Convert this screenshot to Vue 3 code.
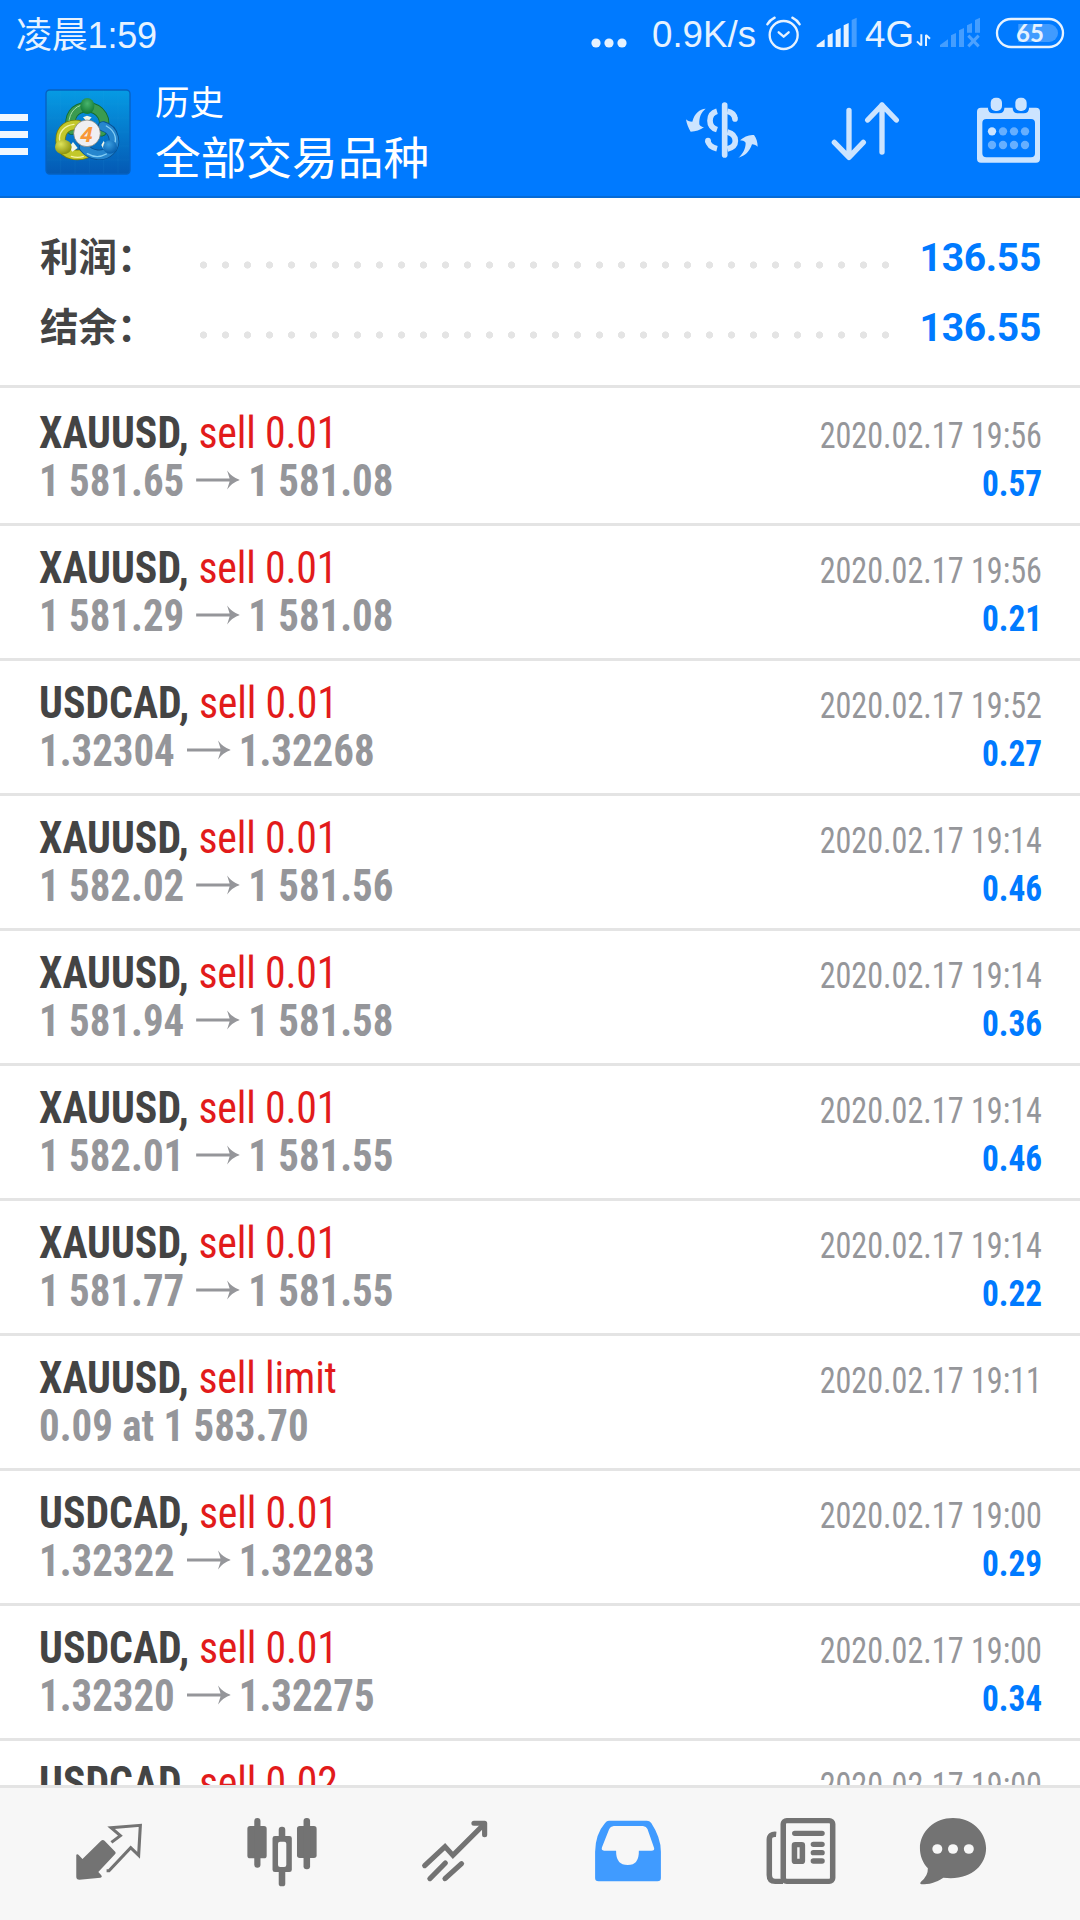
<script setup>
const summary = [
  { label: '利润：', value: '136.55' },
  { label: '结余：', value: '136.55' },
]
const deals = [
  { symbol: 'XAUUSD', side: 'sell 0.01', from: '1 581.65', to: '1 581.08', time: '2020.02.17 19:56', profit: '0.57' },
  { symbol: 'XAUUSD', side: 'sell 0.01', from: '1 581.29', to: '1 581.08', time: '2020.02.17 19:56', profit: '0.21' },
  { symbol: 'USDCAD', side: 'sell 0.01', from: '1.32304', to: '1.32268', time: '2020.02.17 19:52', profit: '0.27' },
  { symbol: 'XAUUSD', side: 'sell 0.01', from: '1 582.02', to: '1 581.56', time: '2020.02.17 19:14', profit: '0.46' },
  { symbol: 'XAUUSD', side: 'sell 0.01', from: '1 581.94', to: '1 581.58', time: '2020.02.17 19:14', profit: '0.36' },
  { symbol: 'XAUUSD', side: 'sell 0.01', from: '1 582.01', to: '1 581.55', time: '2020.02.17 19:14', profit: '0.46' },
  { symbol: 'XAUUSD', side: 'sell 0.01', from: '1 581.77', to: '1 581.55', time: '2020.02.17 19:14', profit: '0.22' },
  { symbol: 'XAUUSD', side: 'sell limit', from: '0.09 at 1 583.70', to: '', time: '2020.02.17 19:11', profit: '' },
  { symbol: 'USDCAD', side: 'sell 0.01', from: '1.32322', to: '1.32283', time: '2020.02.17 19:00', profit: '0.29' },
  { symbol: 'USDCAD', side: 'sell 0.01', from: '1.32320', to: '1.32275', time: '2020.02.17 19:00', profit: '0.34' },
  { symbol: 'USDCAD', side: 'sell 0.02', from: '', to: '', time: '2020.02.17 19:00', profit: '' },
]
</script>

<template>
  <div class="screen">
    <div class="status">
      <span class="clock">凌晨1:59</span>
      <svg class="more" width="36" height="10" viewBox="0 0 36 10" fill="#e6f2ff"><circle cx="5" cy="5" r="4.6" /><circle cx="18" cy="5" r="4.6" /><circle cx="31" cy="5" r="4.6" /></svg>
      <span class="speed">0.9K/s</span>
      <!-- alarm, signal -->
      <svg class="indicators" width="96" height="40" viewBox="586 39 288 120">
        <g fill="none" stroke="#e6f2ff" stroke-width="7" stroke-linecap="round" stroke-linejoin="round">
          <circle cx="642" cy="105" r="42" />
          <path d="M627 97l15 13 15-13" />
          <path d="M593 73Q601 60 615 53M690 73Q682 60 668 53" />
        </g>
        <g fill="#e6f2ff">
          <path d="M741 141v-6l24-17v23zM774 141v-35l15-7v42zM798 141V91l15-7v57zM822 141V76l15-7v72z" />
          <path d="M846 141V60l15-7v88z" opacity=".3" />
        </g>
      </svg>
      <span class="net">4G</span>
      <svg class="tail" width="150" height="40" viewBox="1038 39 450 120">
        <g fill="none" stroke="#e6f2ff" stroke-width="6">
          <path d="M1054 103v34M1041 124l12 12M1068 138v-34M1068 105l12 11" />
        </g>
        <g fill="#e6f2ff" opacity=".3">
          <path d="M1110 141v-6l24-17v23zM1143 141v-35l15-7v42zM1167 141V91l15-7v57zM1191 98V76l15-7v29zM1215 98V60l15-7v45z" />
        </g>
        <path d="M1195 107l31 32M1226 107l-31 32" stroke="#4da2ff" stroke-width="9" />
        <rect x="1281" y="57" width="198" height="84" rx="42" fill="none" stroke="#e6f2ff" stroke-width="7" />
        <path d="M1345 72h92a27 27 0 0 1 0 54h-92z" fill="#409bff" />
        <text x="1380" y="125" text-anchor="middle" class="battery">65</text>
      </svg>
    </div>

    <header class="bar">
      <div class="burger"><i></i><i></i><i></i></div>
      <svg class="logo" width="86" height="86" viewBox="46 26 258 258">
        <defs>
          <linearGradient id="tile" x2="0" y2="1"><stop offset="0" stop-color="#069be4" /><stop offset="1" stop-color="#0459b4" /></linearGradient>
          <radialGradient id="green" cx=".5" cy=".35" r=".6"><stop offset="0" stop-color="#48b46d" /><stop offset="1" stop-color="#167d38" /></radialGradient>
          <radialGradient id="yellow" cx=".35" cy=".3" r=".7"><stop offset="0" stop-color="#dfe35a" /><stop offset="1" stop-color="#8d9410" /></radialGradient>
          <radialGradient id="azure" cx=".4" cy=".3" r=".7"><stop offset="0" stop-color="#3b9fe0" /><stop offset="1" stop-color="#075fae" /></radialGradient>
        </defs>
        <rect x="49" y="29" width="252" height="252" rx="11" fill="url(#tile)" stroke="#0661c0" stroke-width="4" />
        <path d="M93 31v248M136 31v248M179 31v248M222 31v248M265 31v248M51 71h248M51 113h248M51 155h248M51 197h248M51 239h248" stroke="#35aeea" stroke-width="1" opacity=".25" />
        <g fill="none" stroke-linecap="round">
          <path d="M126 148C114 107 135 82 172 80C215 83 235 120 216 153" stroke="#146b31" stroke-width="31" />
          <path d="M126 148C114 107 135 82 172 80C215 83 235 120 216 153" stroke="#3b9b50" stroke-width="26" />
          <path d="M119 142C112 107 133 75 163 73" stroke="#a6dda9" stroke-width="3" />
          <path d="M145 134C105 131 87 157 94 195C105 224 143 229 169 219" stroke="#777d0c" stroke-width="31" />
          <path d="M145 134C105 131 87 157 94 195C105 224 143 229 169 219" stroke="#c3c82b" stroke-width="26" />
          <path d="M133 132C103 135 86 158 90 181M125 228Q145 234 161 228" stroke="#f5f3a3" stroke-width="4" />
          <path d="M220 138C256 148 262 192 241 211C221 231 183 227 163 201" stroke="#075194" stroke-width="31" />
          <path d="M220 138C256 148 262 192 241 211C221 231 183 227 163 201" stroke="#2686ce" stroke-width="26" />
          <path d="M230 137C262 155 261 183 251 196M173 220Q202 237 230 221" stroke="#85cff5" stroke-width="4" />
        </g>
        <path d="M160 111l12-5 14 5-13 15zM118 201l12-16 14 18-16 11zM215 194l7-12 11 17-12 6z" fill="#f1f6e8" />
        <ellipse cx="173" cy="77" rx="21" ry="24" fill="url(#green)" />
        <ellipse cx="101" cy="200" rx="25" ry="22" fill="url(#yellow)" />
        <ellipse cx="241" cy="200" rx="21" ry="20" fill="url(#azure)" />
        <circle cx="172" cy="159" r="40" fill="#f0eff2" stroke="#78776b" stroke-width="2" />
        <text x="171" y="184" text-anchor="middle" class="four">4</text>
      </svg>
      <div class="titles">
        <div class="small">历史</div>
        <div class="large">全部交易品种</div>
      </div>
      <div class="actions">
        <svg width="72" height="72" viewBox="78 46 216 216" fill="#cce4ff">
          <path d="M137 87C119 88 104 100 97 126C88 126 82 123 78 119C80 133 86 147 92 156C107 156 121 151 132 143C126 142 120 139 118 134C117 112 123 99 137 87z" />
          <path d="M235 234C256 229 269 215 276 194C283 194 289 197 293 201C293 188 289 175 282 166C267 164 252 171 240 182C247 182 253 184 257 189C257 207 248 224 235 234z" />
          <g fill="none" stroke="#cce4ff" stroke-width="17">
            <path d="M171 95Q150 101 150 123Q150 143 171 150" />
            <path d="M143 182Q146 201 171 207" stroke-linecap="butt" />
            <path d="M194 76V226" stroke-linecap="round" />
            <path d="M202 95Q222 99 225 117" />
            <path d="M202 157Q226 163 226 184Q226 202 202 208" />
          </g>
          <circle cx="144" cy="183" r="8.5" /><circle cx="225" cy="118" r="8.5" />
        </svg>
        <svg width="72" height="72" viewBox="509 46 216 216" fill="none" stroke="#cce4ff" stroke-width="16" stroke-linecap="round" stroke-linejoin="round">
          <path d="M566 92V233M522 188l44 45 43-45M665 217V76M622 121l43-45 43 45" />
        </svg>
        <svg width="72" height="72" viewBox="942 46 216 216" fill="#cce4ff">
          <path fill-rule="evenodd" d="M963 84H1128Q1140 84 1140 96V237Q1140 249 1128 249H963Q951 249 951 237V96Q951 84 963 84zM979 118Q967 118 967 130V221Q967 233 979 233H1113Q1125 233 1125 221V130Q1125 118 1113 118z" />
          <path d="M984 75V86Q984 101 1000 101H1017Q1033 101 1033 86V75zM1058 75V86Q1058 101 1074 101H1091Q1107 101 1107 86V75z" fill="#007aff" />
          <rect x="992" y="54" width="34" height="40" rx="15" /><rect x="1066" y="54" width="34" height="40" rx="15" />
          <circle cx="996" cy="155" r="12.5" />
          <g fill="#66afff"><circle cx="1029" cy="155" r="12.5" /><circle cx="1062" cy="155" r="12.5" /><circle cx="1095" cy="155" r="12.5" /><circle cx="996" cy="196" r="12.5" /><circle cx="1029" cy="196" r="12.5" /><circle cx="1062" cy="196" r="12.5" /><circle cx="1095" cy="196" r="12.5" /></g>
        </svg>
      </div>
    </header>

    <section class="summary">
      <div v-for="s in summary" :key="s.label" class="total">
        <span class="label">{{ s.label }}</span>
        <span class="dots"></span>
        <span class="value">{{ s.value }}</span>
      </div>
    </section>

    <main class="list">
      <article v-for="(d, i) in deals" :key="i" class="deal">
        <div class="line">
          <span class="name"><b>{{ d.symbol }},</b> <span class="side">{{ d.side }}</span></span>
          <span class="time">{{ d.time }}</span>
        </div>
        <div class="line">
          <span class="price">{{ d.from }}<template v-if="d.to"><svg class="arrow" width="48.5" height="20" viewBox="0 0 44 20" preserveAspectRatio="none" fill="#95969a"><path d="M0 8.6H33.500L31 0.500Q36 7.500 44 10Q36 12.500 31 19.500L33.500 11.400H0z" /></svg>{{ d.to }}</template></span>
          <span class="profit">{{ d.profit }}</span>
        </div>
      </article>
    </main>

    <nav class="tabs">
      <svg viewBox="211.5 168 209 216" preserveAspectRatio="none" fill="#737373">
        <path d="M221 284q4-3 7 1l11 12 54-55q5-4 10 0l31 33q3 4 0 7l-49 54 8 9q5 7-2 8l-61 6q-9 0-9-9z" />
        <path d="M323 247L349 227L322 203L407 196L402 286L379 263L316 332H309" fill="none" stroke="#737373" stroke-width="9" />
      </svg>
      <svg viewBox="713 168 209 216" preserveAspectRatio="none" fill="#737373">
        <rect x="717" y="198" width="56" height="97" rx="8" /><rect x="737" y="174" width="18" height="149" rx="9" />
        <rect x="861" y="198" width="57" height="96" rx="8" /><rect x="880" y="174" width="19" height="154" rx="9" />
        <rect x="808" y="200" width="19" height="45" rx="9" /><rect x="808" y="325" width="19" height="54" rx="8" />
        <rect x="798" y="236" width="40" height="92" fill="#f7f7f7" />
        <path fill-rule="evenodd" d="M797 228h42q7 0 7 7v94q0 7-7 7h-42q-7 0-7-7v-94q0-7 7-7zM812 245q-6 0-6 6v64q0 6 6 6h12q6 0 6-6v-64q0-6-6-6z" />
      </svg>
      <svg viewBox="1215.5 168 209 216" preserveAspectRatio="none" fill="none" stroke="#737373" stroke-width="15" stroke-linecap="round">
        <path d="M1232 317L1291 260L1314 286L1405 192" /><path d="M1375 190H1406V224" stroke-linejoin="round" />
        <path d="M1247 356L1292 309M1291 356L1339 311" />
      </svg>
      <svg viewBox="151 168 209 216" preserveAspectRatio="none" fill="#409bff">
        <path fill-rule="evenodd" d="M200 182H310Q318 182 323 189Q351 233 351 275V354Q351 364 341 364H170Q160 364 160 354V275Q161 222 189 189Q194 182 200 182zM214 198Q204 199 201 207L180 262Q177 272 186 272H221Q220 315 255 315Q288 315 287 272H323Q334 272 331 263L312 207Q309 199 299 198z" />
      </svg>
      <svg viewBox="654.5 168 209 216" preserveAspectRatio="none" fill="none" stroke="#737373" stroke-width="16">
        <path d="M687 223Q667 221 667 239V345Q667 364 684 364H707" />
        <rect x="707.500" y="182" width="143.500" height="182" rx="10" />
        <path d="M741 220H820M795 253H820M795 278H820M795 303H820" stroke-linecap="round" />
        <rect x="740" y="254" width="23" height="50" rx="2" />
      </svg>
      <svg class="chat" viewBox="1094.5 168 209 216" preserveAspectRatio="none" fill="#737373">
        <path d="M1199 174C1252 174 1295 214 1295 265C1295 319 1247 363 1171 353C1149 368 1129 373 1108 373Q1101 371 1106 365Q1127 348 1126 325C1111 309 1103 287 1103 265C1103 214 1146 174 1199 174z" />
        <g fill="#f7f7f7"><circle cx="1153.500" cy="267" r="14.500" /><circle cx="1199" cy="267" r="14.500" /><circle cx="1245" cy="267" r="14.500" /></g>
      </svg>
    </nav>
  </div>
</template>

<style>
body { margin: 0; }
</style>

<style scoped>
.screen { width: 1080px; height: 1920px; display: flex; flex-direction: column; background: #fff; overflow: hidden; font-family: "Roboto Condensed", Roboto, "Noto Sans CJK SC", sans-serif; }
.status { height: 68px; flex: none; background: #007aff; color: #e6f2ff; display: flex; align-items: center; font-family: "Liberation Sans", "Noto Sans CJK SC", sans-serif; font-size: 36.700px; line-height: 68px; white-space: nowrap; }
.status > * { flex: none; }
.clock { width: 574px; padding: 3px 0 0 16px; font-size: 36px; letter-spacing: -0.200px; box-sizing: content-box; }
.more { margin: 17px 0 0 1px; }
.speed { margin-left: 25px; padding-top: 2px; width: 106px; }
.indicators { margin: -2px 0 0 7px; }
.net { margin-left: 4px; padding-top: 2px; width: 50px; }
.tail { margin: -2px 0 0 1px; }
.battery { font: 700 72px Lato, sans-serif; fill: #e6f2ff; }
.bar { height: 130px; flex: none; box-sizing: border-box; border-bottom: 2px solid #066bd6; background: #007aff; display: flex; align-items: flex-start; color: #fff; }
.burger { margin-top: 46px; width: 28px; display: flex; flex-direction: column; gap: 10px; }
.burger i { height: 7px; background: #f0f7ff; }
.logo { margin: 21px 0 0 17px; }
.four { font: italic 700 66px "Open Sans", sans-serif; fill: #f89838; }
.titles { margin: 7px 0 0 24px; font-family: "Noto Sans CJK SC", sans-serif; font-weight: 400; }
.small { font-size: 34.500px; line-height: 50px; }
.large { font-size: 45.700px; line-height: 60px; white-space: nowrap; }
.actions { margin: 27px 34px 0 auto; display: flex; gap: 72px; }
.summary { height: 190px; flex: none; box-sizing: border-box; border-bottom: 3px solid #e4e4e4; padding: 25px 39px 0 40px; }
.total { height: 70px; display: flex; align-items: center; }
.label { width: 159px; margin-top: -7px; font: 700 38.500px/63px "Noto Sans CJK SC", sans-serif; color: #444; }
.dots { width: 690px; height: 8px; margin-top: 13px; background: radial-gradient(circle at 4.500px 4px, #e4e4e4 3.300px, transparent 3.900px) 0 0 / 22px 8px; }
.value { margin-left: auto; font: 700 39px/70px Roboto, sans-serif; letter-spacing: -0.300px; color: #007aff; }
.list { height: 1397px; flex: none; box-sizing: border-box; padding-top: 3px; overflow: hidden; }
.deal { height: 135px; box-sizing: border-box; padding: 18px 38px 0 39px; border-bottom: 3px solid #e4e4e4; font-stretch: 75%; }
.line { height: 48px; line-height: 48px; display: flex; justify-content: space-between; align-items: baseline; white-space: nowrap; }
.name, .price { transform-origin: left; font-size: 45px; }
.time, .profit { transform-origin: right; font-size: 36px; }
.name { transform: scaleX(.93); color: #444; }
.side { letter-spacing: -0.200px; color: #e21b1b; }
.time { transform: scaleX(.893); color: #95969a; }
.price { transform: scaleX(.908); font-weight: 700; color: #95969a; }
.arrow { margin: 0 9px 6px 13px; }
.profit { transform: scaleX(.925); font-weight: 700; color: #007aff; }
.tabs { height: 135px; flex: none; box-sizing: border-box; border-top: 3px solid #e4e4e4; background: #f7f7f7; display: flex; gap: 101px; padding: 28px 0 0 73px; }
.tabs svg { width: 72px; height: 72px; flex: none; }
.tabs .chat { margin-left: -21px; }
</style>
